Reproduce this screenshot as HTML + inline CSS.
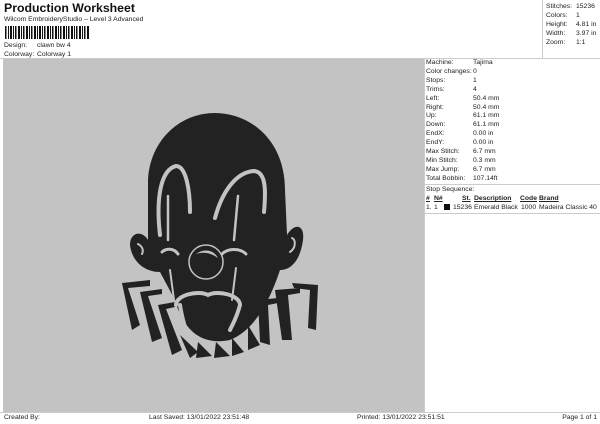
<!DOCTYPE html>
<html><head><style>
body{margin:0;width:600px;height:424px;background:#fff;font-family:"Liberation Sans",sans-serif;color:#222;position:relative;overflow:hidden}
.a{position:absolute;font-size:6.8px;white-space:nowrap;line-height:9px}
.t{position:absolute}
</style></head><body>
<div class="a" style="left:4px;top:1px;font-size:12.3px;font-weight:bold;line-height:15px;color:#111">Production Worksheet</div>
<div class="a" style="left:4px;top:15px">Wilcom EmbroideryStudio – Level 3 Advanced</div>
<svg class="t" style="left:5px;top:26px" width="85" height="13">
<g fill="#111">
<rect x="0" y="0" width="1.5" height="13"/><rect x="3" y="0" width="1" height="13"/><rect x="5" y="0" width="2" height="13"/><rect x="8" y="0" width="1" height="13"/><rect x="10" y="0" width="1.5" height="13"/><rect x="13" y="0" width="2" height="13"/><rect x="16" y="0" width="1" height="13"/><rect x="18" y="0" width="1.5" height="13"/><rect x="21" y="0" width="2" height="13"/><rect x="24" y="0" width="1" height="13"/><rect x="26" y="0" width="1.5" height="13"/><rect x="29" y="0" width="2" height="13"/><rect x="32" y="0" width="1" height="13"/><rect x="34" y="0" width="2" height="13"/><rect x="37" y="0" width="1" height="13"/><rect x="39" y="0" width="1.5" height="13"/><rect x="42" y="0" width="2" height="13"/><rect x="45" y="0" width="1" height="13"/><rect x="47" y="0" width="1.5" height="13"/><rect x="50" y="0" width="2" height="13"/><rect x="53" y="0" width="1" height="13"/><rect x="55" y="0" width="1.5" height="13"/><rect x="58" y="0" width="2" height="13"/><rect x="61" y="0" width="1" height="13"/><rect x="63" y="0" width="1.5" height="13"/><rect x="66" y="0" width="2" height="13"/><rect x="69" y="0" width="1" height="13"/><rect x="71" y="0" width="1.5" height="13"/><rect x="74" y="0" width="2" height="13"/><rect x="77" y="0" width="1" height="13"/><rect x="79" y="0" width="1.5" height="13"/><rect x="82" y="0" width="2" height="13"/>
</g></svg>
<div class="a" style="left:4px;top:41px">Design:</div><div class="a" style="left:37px;top:41px">clawn bw 4</div>
<div class="a" style="left:4px;top:50px">Colorway:</div><div class="a" style="left:37px;top:50px">Colorway 1</div>
<div class="t" style="left:0;top:58px;width:600px;height:1px;background:#ccc"></div>
<div class="t" style="left:542px;top:0;width:1px;height:58px;background:#ccc"></div>
<div class="a" style="left:546px;top:2px">Stitches:</div><div class="a" style="left:576px;top:2px">15236</div>
<div class="a" style="left:546px;top:11px">Colors:</div><div class="a" style="left:576px;top:11px">1</div>
<div class="a" style="left:546px;top:20px">Height:</div><div class="a" style="left:576px;top:20px">4.81 in</div>
<div class="a" style="left:546px;top:29px">Width:</div><div class="a" style="left:576px;top:29px">3.97 in</div>
<div class="a" style="left:546px;top:38px">Zoom:</div><div class="a" style="left:576px;top:38px">1:1</div>
<div class="t" style="left:3px;top:59px;width:421px;height:353px;background:#c3c3c3"></div>
<div class="t" style="left:424px;top:59px;width:1px;height:353px;background:#ccc"></div>
<div class="a" style="left:426px;top:59px;line-height:8.9px">Machine:<br>Color changes:<br>Stops:<br>Trims:<br>Left:<br>Right:<br>Up:<br>Down:<br>EndX:<br>EndY:<br>Max Stitch:<br>Min Stitch:<br>Max Jump:<br>Total Bobbin:</div>
<div class="a" style="left:473px;top:59px;line-height:8.9px">Tajima<br>0<br>1<br>4<br>50.4 mm<br>50.4 mm<br>61.1 mm<br>61.1 mm<br>0.00 in<br>0.00 in<br>6.7 mm<br>0.3 mm<br>6.7 mm<br>107.14ft</div>
<div class="t" style="left:424px;top:184px;width:176px;height:1px;background:#ccc"></div>
<div class="a" style="left:426px;top:185px">Stop Sequence:</div>
<div class="a" style="left:426px;top:194px;font-weight:bold;text-decoration:underline">#</div>
<div class="a" style="left:434px;top:194px;font-weight:bold;text-decoration:underline">N#</div>
<div class="a" style="left:462px;top:194px;font-weight:bold;text-decoration:underline">St.</div>
<div class="a" style="left:474px;top:194px;font-weight:bold;text-decoration:underline">Description</div>
<div class="a" style="left:520px;top:194px;font-weight:bold;text-decoration:underline">Code</div>
<div class="a" style="left:539px;top:194px;font-weight:bold;text-decoration:underline">Brand</div>
<div class="a" style="left:426px;top:203px">1.</div><div class="a" style="left:434px;top:203px">1</div>
<div class="t" style="left:444px;top:204px;width:6px;height:6px;background:#111"></div>
<div class="a" style="left:453px;top:203px">15236</div>
<div class="a" style="left:474px;top:203px">Emerald Black</div>
<div class="a" style="left:521px;top:203px">1000</div>
<div class="a" style="left:539px;top:203px">Madeira Classic 40</div>
<div class="t" style="left:424px;top:213px;width:176px;height:1px;background:#ccc"></div>
<div class="t" style="left:0;top:412px;width:600px;height:1px;background:#ccc"></div>
<div class="a" style="left:4px;top:413px">Created By:</div>
<div class="a" style="left:149px;top:413px">Last Saved: 13/01/2022 23:51:48</div>
<div class="a" style="left:357px;top:413px">Printed: 13/01/2022 23:51:51</div>
<div class="a" style="right:3px;top:413px">Page 1 of 1</div>
<svg class="t" style="left:0;top:0" width="424" height="412">
<g fill="#222">
<path d="M122 283 L150 280 L150 286 L128 288 L140 325 L132 330 Z"/>
<path d="M140 292 L162 289 L162 294 L148 296 L162 338 L152 342 Z"/>
<path d="M158 305 L175 302 L175 307 L166 309 L182 350 L172 355 Z"/>
<path d="M180 335 L198 352 L190 358 Z"/>
<path d="M198 342 L212 356 L196 358 Z"/>
<path d="M216 342 L230 356 L214 358 Z"/>
<path d="M232 338 L244 352 L232 356 Z"/>
<path d="M248 325 L260 345 L248 350 Z"/>
<path d="M258 300 L278 298 L278 303 L268 305 L270 345 L260 342 Z"/>
<path d="M275 290 L300 288 L300 293 L288 295 L292 340 L282 340 Z"/>
<path d="M292 283 L318 285 L316 330 L308 328 L310 290 L294 288 Z"/>
<path d="M215 113 C250 113 285 140 285 190 L287 235 C295 222 305 225 303 240 C300 262 290 270 280 270 C270 300 255 330 230 340 C205 345 185 335 175 300 L160 272 C145 272 132 262 130 245 C130 232 142 230 148 240 L148 180 C150 140 180 113 215 113 Z"/>
</g>
<g fill="none" stroke="#c3c3c3" stroke-linecap="round">
<path d="M160 235 C156 200 160 170 176 166 C186 166 190 190 190 212" stroke-width="4"/>
<path d="M215 218 C222 192 236 172 254 171 C266 172 266 190 264 212" stroke-width="4"/>
<path d="M168 196 L168 240" stroke-width="2.5"/>
<path d="M238 196 L234 240" stroke-width="2.5"/>
<path d="M162 252 C166 248 174 248 178 254" stroke-width="3"/>
<path d="M222 254 C228 248 240 248 246 254" stroke-width="3"/>
<path d="M170 270 L174 300" stroke-width="2"/>
<path d="M236 268 L232 300" stroke-width="2"/>
<path d="M292 238 C296 240 296 248 290 252" stroke-width="2"/>
<path d="M138 244 C142 246 144 250 142 254" stroke-width="2"/>
<path d="M176 305 C176 295 198 290 208 295 C218 290 240 295 240 305 C236 320 232 325 230 330" stroke-width="4"/>
<path d="M180 305 C182 318 184 324 186 330" stroke-width="4"/>
</g>
<circle cx="206" cy="262" r="17" fill="#222" stroke="#c3c3c3" stroke-width="1.5"/>
<path d="M196 254 C204 248 214 250 218 258 C210 252 202 252 196 254 Z" fill="#c3c3c3"/>
</svg>
</body></html>
